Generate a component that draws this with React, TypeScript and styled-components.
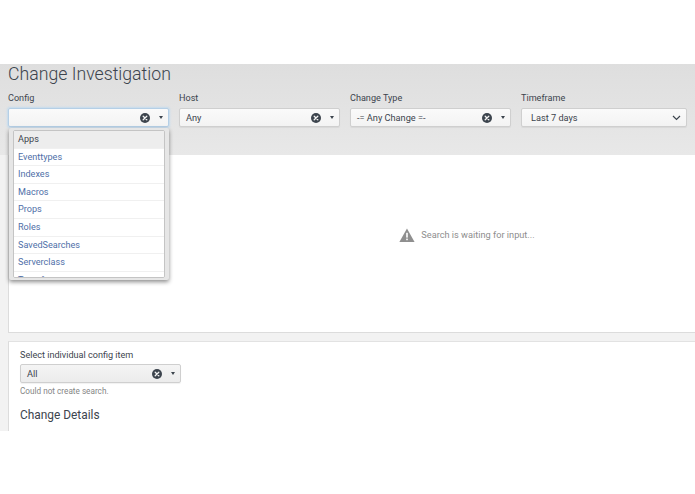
import styled, { createGlobalStyle } from "styled-components";

const GlobalStyle = createGlobalStyle`
  html, body {
    margin: 0;
    padding: 0;
    background: #fff;
    overflow: hidden;
  }
  body {
    font-family: Roboto, "Liberation Sans", sans-serif;
    color: #3c444d;
  }
`;

const Page = styled.div`
  width: 695px;
  height: 494px;
  padding-top: 64px;
  box-sizing: border-box;
  overflow: hidden;
`;

const Header = styled.header`
  height: 91px;
  box-sizing: border-box;
  background: linear-gradient(#dedede, #e8e8e8);
  padding: 0 8px;
`;

const Title = styled.h1`
  margin: 0;
  height: 27px;
  font-size: 17.7px;
  line-height: 20px;
  font-weight: 300;
  color: #3c444d;
`;

const Filters = styled.div`
  display: flex;
  gap: 10px;
`;

const Field = styled.div`
  position: relative;
  width: 161px;
`;

const Label = styled.div`
  font-size: 9.1px;
  line-height: 15px;
  height: 17px;
  color: #3c444d;
`;

const Select = styled.div<{ $focused?: boolean; $inPanel?: boolean }>`
  height: 17px;
  width: 153px;
  display: flex;
  align-items: center;
  padding-left: 6px;
  border: 1px solid ${(p) => (p.$focused ? "#b5cfe6" : "#cfcfcf")};
  border-radius: 2px;
  background: ${(p) => (p.$inPanel ? "linear-gradient(#f4f4f4, #ececec)" : "linear-gradient(#fafafa, #f3f3f3)")};
  box-shadow: ${(p) => (p.$focused ? "0 0 2px 1px #c4dbee" : "0 1px 1px rgba(0,0,0,0.06)")};
  font-size: 9.2px;
  color: #3c444d;
`;

const SelectValue = styled.span`
  flex: 1;
  white-space: nowrap;
`;

const Clear = styled.svg`
  width: 10px;
  height: 10px;
  margin-right: 9px;
  flex: none;
`;

const Caret = styled.span`
  width: 0;
  height: 0;
  margin-right: 5px;
  border-left: 2.5px solid transparent;
  border-right: 2.5px solid transparent;
  border-top: 3px solid #3c444d;
  flex: none;
`;

const TimeButton = styled(Select)`
  padding-left: 9px;
  width: 155px;
`;

const Chevron = styled.svg`
  width: 9px;
  height: 6px;
  margin-right: 5px;
  flex: none;
`;

const Menu = styled.ul`
  position: absolute;
  z-index: 2;
  left: 1px;
  top: 37px;
  width: 160px;
  height: 152px;
  margin: 0;
  padding: 2px 4px;
  box-sizing: border-box;
  list-style: none;
  background: #e6e6e6;
  border-radius: 2px;
  box-shadow: 0 2px 4px rgba(0, 0, 0, 0.45);
`;

const MenuInner = styled.div`
  height: 100%;
  overflow: hidden;
  background: #fff;
  border: 1px solid #c4c4c4;
  border-radius: 2px;
  box-sizing: border-box;
`;

const MenuItem = styled.li<{ $active?: boolean }>`
  height: 17.6px;
  line-height: 17px;
  box-sizing: border-box;
  padding-left: 4px;
  font-size: 9.1px;
  color: ${(p) => (p.$active ? "#3c444d" : "#4f6fa8")};
  background: ${(p) => (p.$active ? "#ededed" : "#fff")};
  border-bottom: 1px solid #f0f0f0;
`;

const Content = styled.main`
  height: 276px;
  background: #f2f2f2;
  padding-left: 8px;
  display: flex;
  flex-direction: column;
  gap: 8px;
`;

const ResultPanel = styled.section`
  height: 178px;
  box-sizing: border-box;
  background: #fff;
  border-left: 1px solid #dcdcdc;
  border-bottom: 1px solid #dcdcdc;
  display: flex;
  align-items: center;
  justify-content: center;
  gap: 6px;
  padding: 0 0 18px 230px;
`;

const Waiting = styled.span`
  font-size: 9.2px;
  color: #8e8e8e;
`;

const DetailPanel = styled.section`
  flex: 1;
  background: #fff;
  border-left: 1px solid #dcdcdc;
  border-top: 1px solid #e2e2e2;
  padding: 6px 0 0 11px;
`;

const DetailLabel = styled(Label)`
  height: 16px;
`;

const Hint = styled.div`
  font-size: 8.2px;
  line-height: 11px;
  margin-top: 3px;
  color: #858585;
`;

const SectionTitle = styled.h2`
  margin: 10px 0 0;
  font-size: 11.9px;
  line-height: 16px;
  font-weight: 400;
  color: #3c444d;
`;

function ClearIcon() {
  return (
    <Clear viewBox="0 0 10 10">
      <circle cx="5" cy="5" r="5" fill="#3c444d" />
      <path d="M3.2 3.2l3.6 3.6M6.8 3.2l-3.6 3.6" stroke="#f4f4f4" strokeWidth="1.3" strokeLinecap="round" />
    </Clear>
  );
}

function Dropdown({ value, focused, inPanel }: { value?: string; focused?: boolean; inPanel?: boolean }) {
  return (
    <Select $focused={focused} $inPanel={inPanel}>
      <SelectValue>{value}</SelectValue>
      <ClearIcon />
      <Caret />
    </Select>
  );
}

const configs = ["Eventtypes", "Indexes", "Macros", "Props", "Roles", "SavedSearches", "Serverclass", "Transforms"];

export default function App() {
  return (
    <Page>
      <GlobalStyle />
      <Header>
        <Title>Change Investigation</Title>
        <Filters>
          <Field>
            <Label>Config</Label>
            <Dropdown focused />
            <Menu>
              <MenuInner>
                <MenuItem $active>Apps</MenuItem>
                {configs.map((c) => (
                  <MenuItem key={c}>{c}</MenuItem>
                ))}
              </MenuInner>
            </Menu>
          </Field>
          <Field>
            <Label>Host</Label>
            <Dropdown value="Any" />
          </Field>
          <Field>
            <Label>Change Type</Label>
            <Dropdown value="-= Any Change =-" />
          </Field>
          <Field>
            <Label>Timeframe</Label>
            <TimeButton>
              <SelectValue>Last 7 days</SelectValue>
              <Chevron viewBox="0 0 9 6">
                <path d="M1 1l3.5 3.5L8 1" fill="none" stroke="#3c444d" strokeWidth="1.2" />
              </Chevron>
            </TimeButton>
          </Field>
        </Filters>
      </Header>
      <Content>
        <ResultPanel>
          <svg width="16" height="14" viewBox="0 0 16 14">
            <path d="M8 0.5L15.6 14H0.4z" fill="#8f8f8f" />
            <rect x="7.2" y="4.8" width="1.6" height="4.8" fill="#fff" />
            <rect x="7.2" y="10.6" width="1.6" height="1.6" fill="#fff" />
          </svg>
          <Waiting>Search is waiting for input...</Waiting>
        </ResultPanel>
        <DetailPanel>
          <DetailLabel>Select individual config item</DetailLabel>
          <Dropdown value="All" inPanel />
          <Hint>Could not create search.</Hint>
          <SectionTitle>Change Details</SectionTitle>
        </DetailPanel>
      </Content>
    </Page>
  );
}
